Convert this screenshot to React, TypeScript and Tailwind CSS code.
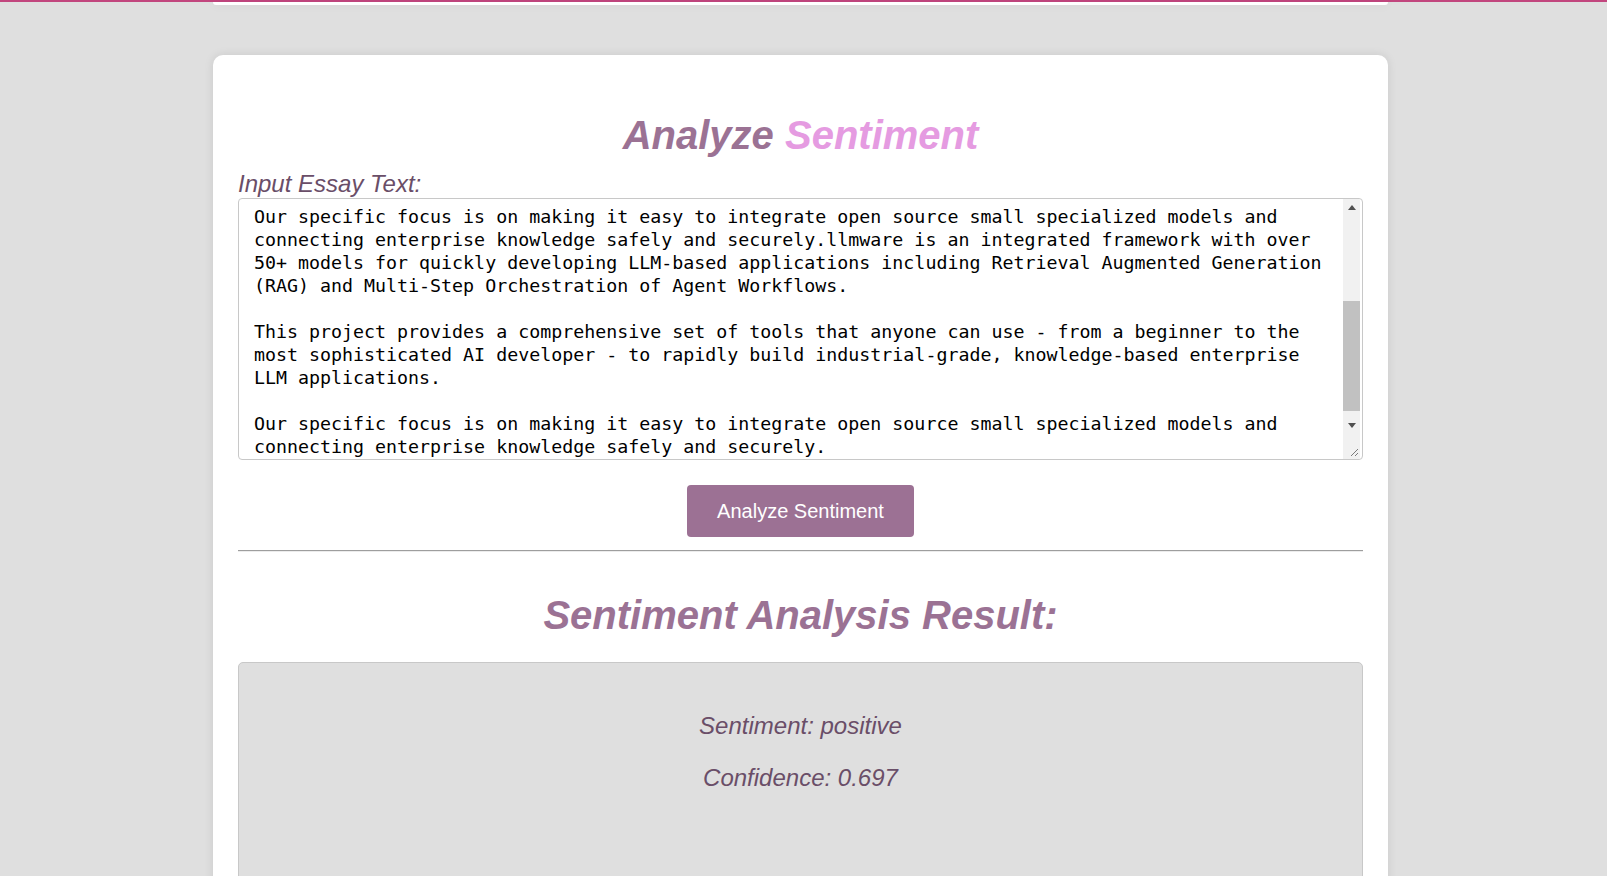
import { useState } from "react";

const essayText = `Our specific focus is on making it easy to integrate open source small specialized models and connecting enterprise knowledge safely and securely.llmware is an integrated framework with over 50+ models for quickly developing LLM-based applications including Retrieval Augmented Generation (RAG) and Multi-Step Orchestration of Agent Workflows.

This project provides a comprehensive set of tools that anyone can use - from a beginner to the most sophisticated AI developer - to rapidly build industrial-grade, knowledge-based enterprise LLM applications.

Our specific focus is on making it easy to integrate open source small specialized models and connecting enterprise knowledge safely and securely.`;

interface Result {
  sentiment: string;
  confidence: number;
}

export default function App() {
  const [text, setText] = useState(essayText);
  const [result] = useState<Result>({ sentiment: "positive", confidence: 0.697 });

  return (
    <div className="min-h-screen bg-[#dfdfdf] font-['Liberation_Sans',Arial,sans-serif]">
      {/* top bar edge */}
      <div className="h-[2px] w-full bg-[#c2467e]" />

      <div className="flex justify-center pr-[6px]">
        <div className="w-[1175px]">
          {/* previous card, scrolled out of view */}
          <div className="h-[3px] bg-white rounded-b-[10px] shadow-[0_0_10px_rgba(0,0,0,0.08)]" />

          {/* Main card */}
          <div className="mt-[50px] bg-white rounded-[10px] px-[25px] pt-[57px] shadow-[0_0_10px_rgba(0,0,0,0.1)]">
            <h1 className="text-center text-[40px] leading-[46px] font-bold italic text-[#9b7294]">
              Analyze <span className="text-[#e59be1]">Sentiment</span>
            </h1>

            <label className="block mt-[12px] text-[24px] leading-[28px] italic text-[#6a4e68]">
              Input Essay Text:
            </label>

            {/* Textarea */}
            <div className="relative h-[262px]">
              <textarea
                value={text}
                onChange={(e) => setText(e.target.value)}
                spellCheck={false}
                className="w-full h-full resize-none overflow-hidden border border-[#c8c8c8] rounded-[4px] bg-white pl-[15px] pr-[30px] pt-[6px] text-[18.3px] leading-[23px] text-black font-['DejaVu_Sans_Mono',monospace] outline-none"
              />
              {/* scrollbar */}
              <div className="absolute right-[3px] top-px bottom-px w-[17px] flex flex-col bg-[#f1f1f1]">
                <div className="h-[17px] flex items-center justify-center">
                  <div className="w-0 h-0 border-x-[4px] border-x-transparent border-b-[5px] border-b-[#505050]" />
                </div>
                <div className="h-[85px]" />
                <div className="h-[110px] bg-[#c1c1c1]" />
                <div className="h-[6px]" />
                <div className="h-[17px] flex items-center justify-center">
                  <div className="w-0 h-0 border-x-[4px] border-x-transparent border-t-[5px] border-t-[#505050]" />
                </div>
                <div className="flex-1 flex items-end justify-end pb-[2px] pr-[1px]">
                  <svg width="10" height="10" viewBox="0 0 10 10">
                    <path d="M9 2 L2 9 M9 6 L6 9" stroke="#7a7a7a" strokeWidth="1" />
                  </svg>
                </div>
              </div>
            </div>

            <div className="flex justify-center mt-[25px]">
              <button className="h-[52px] px-[30px] rounded-[4px] bg-[#9c7194] text-white text-[20px]">
                Analyze Sentiment
              </button>
            </div>

            <hr className="mt-[13px] border-t border-b border-t-[#9e9e9e] border-b-[#ececec]" />

            <h2 className="mt-[40px] text-center text-[40px] leading-[46px] font-bold italic text-[#9b7294]">
              Sentiment Analysis Result:
            </h2>

            {/* Result box */}
            <div className="mt-[24px] min-h-[260px] bg-[#dfdfdf] border border-[#c8c8c8] rounded-t-[5px] pt-[49px] pb-[40px] text-center text-[24px] leading-[28px] italic text-[#6a4e68]">
              <p>Sentiment: {result.sentiment}</p>
              <p className="mt-[24px]">Confidence: {result.confidence}</p>
            </div>
          </div>
        </div>
      </div>
    </div>
  );
}
